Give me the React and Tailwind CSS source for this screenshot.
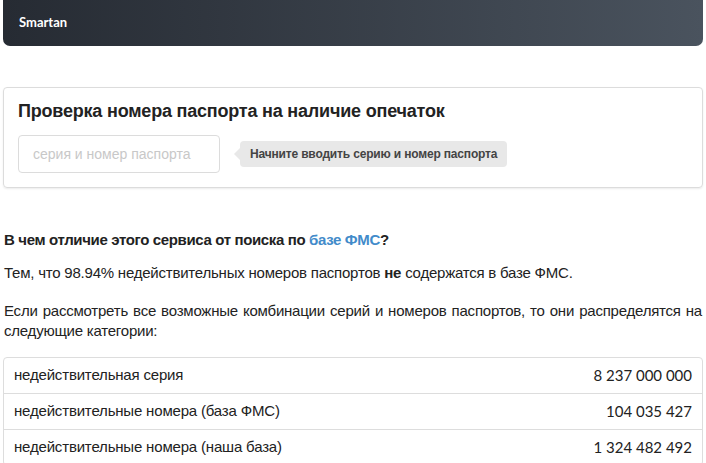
export default function App() {
  const lato = { fontFamily: "Lato, sans-serif" };
  const lib = { fontFamily: "'Liberation Sans', Arial, sans-serif" };
  const rows = [
    ["недействительная серия", "8 237 000 000"],
    ["недействительные номера (база ФМС)", "104 035 427"],
    ["недействительные номера (наша база)", "1 324 482 492"],
  ];
  return (
    <div className="min-h-[463px] bg-white text-[15px] text-[#222] px-[3px]" style={lib}>
      <div className="h-[46px] rounded-b-[7px] bg-gradient-to-r from-[#262b33] to-[#4a535e] flex items-center px-4">
        <span className="text-white font-bold text-[13px]" style={lato}>Smartan</span>
      </div>
      <div className="mt-[41px] border border-[#dcdcdc] rounded-[4px] shadow-[0_1px_2px_rgba(0,0,0,0.08)] px-[14px] pt-[11px] pb-[14px]">
        <h1 className="text-[18px] font-bold leading-[24px] text-[#222] tracking-[-0.2px]">Проверка номера паспорта на наличие опечаток</h1>
        <div className="mt-[12px] flex items-center">
          <div className="w-[202px] h-[38px] border border-[#dcdcdc] rounded-[4px] flex items-center px-[14px] text-[14px] text-[#c8c8c8]">
            серия и номер паспорта
          </div>
          <div className="relative ml-[20px] h-[26px] bg-[#e8e8e8] rounded-[4px] flex items-center px-[10px] text-[12px] font-bold text-[#444] tracking-[-0.17px]">
            <span className="absolute left-[-6px] top-[7px] w-0 h-0 border-y-[6px] border-y-transparent border-r-[6px] border-r-[#e8e8e8]" />
            Начните вводить серию и номер паспорта
          </div>
        </div>
      </div>
      <div className="mt-[42px] px-[1px] tracking-[-0.22px]">
        <p className="font-bold leading-[20px] tracking-[-0.36px]">
          В чем отличие этого сервиса от поиска по <span className="text-[#428bca]">базе ФМС</span>?
        </p>
        <p className="mt-[13px] leading-[20px]">
          Тем, что 98.94% недействительных номеров паспортов <b>не</b> содержатся в базе ФМС.
        </p>
        <p className="mt-[18px] leading-[20px] text-justify">
          Если рассмотреть все возможные комбинации серий и номеров паспортов, то они распределятся на следующие категории:
        </p>
      </div>
      <div className="mt-[16px] border border-[#ddd] rounded-[4px]">
        {rows.map(([a, b], i) => (
          <div key={i} className={"flex justify-between items-center px-[10px] " + (i > 0 ? "h-[36px] border-t border-[#ddd]" : "h-[35px]")}>
            <span className="tracking-[-0.18px]">{a}</span>
            <span style={lato}>{b}</span>
          </div>
        ))}
      </div>
    </div>
  );
}
